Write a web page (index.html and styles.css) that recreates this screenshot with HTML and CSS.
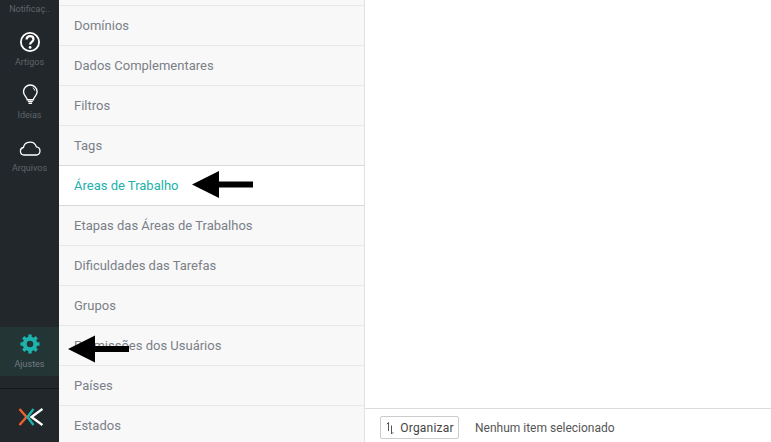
FILE: index.html
```html
<!DOCTYPE html>
<html lang="pt">
<head>
  <meta charset="UTF-8" />
  <title>Ajustes</title>
  <link rel="stylesheet" href="styles.css">
</head>
<body>
  <!-- SIDEBAR -->
  <aside class="sidebar">
    <div class="side-top">
      <div class="side-cut">Notificaç..</div>
      <a class="side-item">
        <svg class="side-icon" viewBox="0 0 24 24" width="24" height="24">
          <circle cx="12" cy="12" r="9.1" fill="none" stroke="#fff" stroke-width="1.800"/>
          <path d="M8.600 9.600c0-2.100 1.500-3.400 3.500-3.400s3.400 1.300 3.400 3c0 2.600-3.400 2.700-3.400 5.300" fill="none" stroke="#fff" stroke-width="2.200"/>
          <circle cx="12.100" cy="17.400" r="1.400" fill="#fff"/>
        </svg>
        <span>Artigos</span>
      </a>
      <a class="side-item">
        <svg class="side-icon" viewBox="0 0 24 24" width="24" height="24">
          <path d="M9.200 16.800c0-2.800-3.700-3.800-3.700-8a6.800 6.800 0 0 1 13.600 0c0 4.200-3.700 5.200-3.700 8z" fill="none" stroke="#fff" stroke-width="1.400"/>
          <path d="M14.800 4.600a4.500 4.500 0 0 1 2 3" fill="none" stroke="#fff" stroke-width="1"/>
          <path d="M9.800 18.400h5M10.500 20.200h3.600" stroke="#fff" stroke-width="1.400"/>
        </svg>
        <span>Ideias</span>
      </a>
      <a class="side-item">
        <svg class="side-icon" viewBox="0 0 24 24" width="24" height="24">
          <path d="M6 19a3.800 3.800 0 0 1-.6-7.500 6.700 6.700 0 0 1 13-.6 4.100 4.100 0 0 1 .2 8.100z" fill="none" stroke="#fff" stroke-width="1.300"/>
        </svg>
        <span>Arquivos</span>
      </a>
    </div>
    <a class="side-item active">
      <svg class="side-icon" viewBox="0 0 24 24" width="24" height="24">
        <circle cx="12" cy="12" r="5.300" fill="none" stroke="#1db4ae" stroke-width="4"/>
        <path d="M12 2.500v4M12 17.500v4M2.500 12h4M17.500 12h4M5.300 5.300l2.800 2.800M15.900 15.900l2.800 2.800M18.700 5.300l-2.800 2.800M8.100 15.900l-2.800 2.800" stroke="#1db4ae" stroke-width="3.400"/>
      </svg>
      <span>Ajustes</span>
    </a>
    <div class="side-logo">
      <svg viewBox="0 0 26 18" width="26" height="18">
        <path d="M2.500 1l7 8-7 8" fill="none" stroke="#f0622a" stroke-width="2.400"/>
        <path d="M16.500 1l-6 8 6 8" fill="none" stroke="#1db4ae" stroke-width="2.400"/>
        <path d="M25.500 1L14.500 9l11 8" fill="none" stroke="#fff" stroke-width="2.400"/>
      </svg>
    </div>
  </aside>

  <!-- LIST -->
  <section class="list">
    <a class="list-item first">Domínios</a>
    <a class="list-item">Dados Complementares</a>
    <a class="list-item">Filtros</a>
    <a class="list-item">Tags</a>
    <a class="list-item selected">Áreas de Trabalho</a>
    <a class="list-item">Etapas das Áreas de Trabalhos</a>
    <a class="list-item">Dificuldades das Tarefas</a>
    <a class="list-item">Grupos</a>
    <a class="list-item">Permissões dos Usuários</a>
    <a class="list-item">Países</a>
    <a class="list-item">Estados</a>
  </section>

  <!-- CONTENT -->
  <main class="content">
    <div class="content-body"></div>
    <div class="toolbar">
      <button class="btn">
        <svg viewBox="0 0 10 14" width="10" height="14">
          <path d="M3.500 10V1.500L1.800 3.200M6.500 4.500V13l1.700-1.700" fill="none" stroke="#555" stroke-width="1"/>
        </svg>
        Organizar
      </button>
      <span class="toolbar-text">Nenhum item selecionado</span>
    </div>
  </main>

  <!-- ARROWS -->
  <svg class="arrow arrow-top" viewBox="0 0 61 27" width="61" height="27"><path d="M0 13.500L27 0v10.500h34v6H27V27z"/></svg>
  <svg class="arrow arrow-side" viewBox="0 0 61 27" width="61" height="28"><path d="M0 13.500L27 0v10.500h34v6H27V27z"/></svg>
</body>
</html>
```

FILE: styles.css
```css
* {
  box-sizing: border-box;
  font-family: Roboto, 'Liberation Sans', sans-serif;
}

body {
  margin: 0;
  height: 442px;
  display: flex;
  overflow: hidden;
  position: relative;
  background: #fff;
}

.sidebar {
  width: 59px;
  flex-shrink: 0;
  background: #22272b;
  display: flex;
  flex-direction: column;
}

.side-top {
  flex: 1;
}

.side-cut {
  height: 18px;
  padding-top: 3px;
  font-size: 9px;
  line-height: 12px;
  color: #5f656a;
  text-align: center;
  white-space: nowrap;
}

.side-item {
  height: 53px;
  padding-top: 11px;
  display: flex;
  flex-direction: column;
  align-items: center;
  font-size: 9px;
  line-height: 12px;
  color: #5f656a;
}

.side-icon {
  margin-top: 1px;
  margin-bottom: 2px;
}

.side-item.active {
  height: 49px;
  padding-top: 4px;
  margin-bottom: 12px;
  background: #243536;
  color: #737b7f;
}

.side-logo {
  height: 54px;
  border-top: 1px solid #14181a;
  display: flex;
  justify-content: center;
  padding-top: 19px;
}

.list {
  width: 306px;
  flex-shrink: 0;
  padding-top: 5px;
  background: #f8f8f8;
  border-right: 1px solid #e2e2e2;
}

.list-item {
  display: block;
  height: 40px;
  padding-left: 15px;
  border-bottom: 1px solid #e8e8e8;
  font-size: 13px;
  line-height: 39px;
  color: #7a8088;
}

.list-item.first {
  height: 41px;
  border-top: 1px solid #e8e8e8;
}

.list-item.selected {
  background: #fff;
  color: #20b2aa;
  border-top: 1px solid #d8d8d8;
  border-bottom: 1px solid #d8d8d8;
  margin-top: -1px;
  height: 41px;
  line-height: 39px;
}

.content {
  flex: 1;
  display: flex;
  flex-direction: column;
}

.content-body {
  flex: 1;
}

.toolbar {
  height: 34px;
  padding: 4px 0 0 15px;
  border-top: 1px solid #dcdcdc;
  background: #fff;
  display: flex;
  align-items: center;
  gap: 16px;
}

.btn {
  width: 79px;
  height: 23px;
  padding: 0;
  border: 1px solid #ccc;
  border-radius: 2px;
  background: #fff;
  color: #444;
  font-size: 12px;
  letter-spacing: 0.2px;
  display: flex;
  align-items: center;
  justify-content: center;
  gap: 5px;
}

.toolbar-text {
  font-size: 12px;
  color: #555;
}

.arrow {
  position: absolute;
  fill: #000;
}

.arrow-top {
  left: 192px;
  top: 171px;
}

.arrow-side {
  left: 68px;
  top: 335px;
}
```
